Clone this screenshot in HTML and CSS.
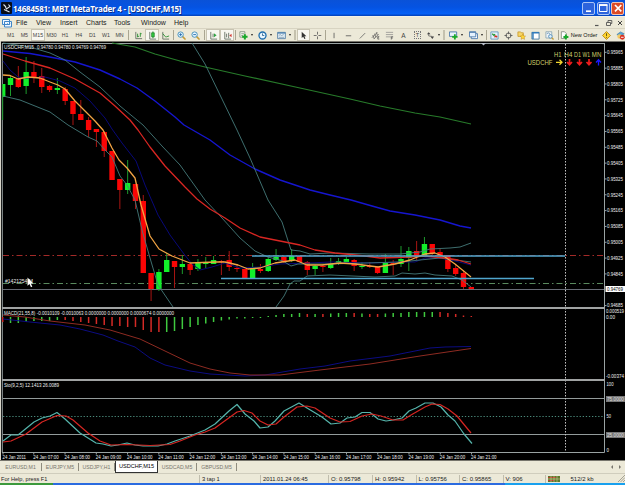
FILE: index.html
```html
<!DOCTYPE html>
<html lang="en">
<head>
<meta charset="utf-8">
<title>14684581: MBT MetaTrader 4 - [USDCHF,M15]</title>
<link rel="stylesheet" href="styles.css">
</head>
<body>
<div class="app">
  <header class="title">
    <svg class="logo" width="11" height="12" viewBox="0 0 11 12"><rect width="11" height="12" rx="1" fill="#080c16"/><path d="M2.500 2.500L5 5M7.500 2.500L9 4.500 5.500 7 4.500 5M3 7.500L8.500 10" stroke="#dfe6ee" stroke-width="1.1" fill="none"/></svg>
    <span class="title-text">14684581: MBT MetaTrader 4 - [USDCHF,M15]</span>
    <div class="winbtns">
      <b><svg width="12" height="12" viewBox="0 0 12 12"><path d="M3 9.2h5" stroke="#fff" stroke-width="1.7"/></svg></b>
      <b><svg width="12" height="12" viewBox="0 0 12 12"><path d="M2.5 3.2h7.5v6.3H2.5z" stroke="#fff" fill="none"/><path d="M2 3h8.500" stroke="#fff" stroke-width="1.8"/></svg></b>
      <b class="close"><svg width="12" height="12" viewBox="0 0 12 12"><path d="M3 3l6.3 6.3M9.3 3L3 9.3" stroke="#fff" stroke-width="1.7"/></svg></b>
    </div>
  </header>
  <nav class="menu">
    <svg class="menu-icon" width="10" height="10" viewBox="0 0 10 10"><path d="M.5 1.5h7v5h-7zM2.5 3.5h7v5.5h-7z" fill="#eef6ff" stroke="#3f86c8"/><path d="M4 7l1.5-1.5L7 7l1-2" stroke="#3f86c8" fill="none" stroke-width=".8"/></svg>
    <span class="m20">File</span><span class="m24">View</span><span class="m26">Insert</span><span class="m28">Charts</span><span class="m27">Tools</span><span class="m33">Window</span><span>Help</span>
    <div class="mdi">
      <svg width="10" height="10" viewBox="0 0 10 10"><path d="M3 7.5h3.5" stroke="#555" stroke-width="1.2"/></svg>
      <svg width="10" height="10" viewBox="0 0 10 10"><path d="M2.5 4.500h4v3h-4zM4 4.500v-2h3.800v3H6.500" stroke="#555" fill="none" stroke-width=".9"/></svg>
      <svg width="10" height="10" viewBox="0 0 10 10"><path d="M3 3l4 4M7 3L3 7" stroke="#444" stroke-width="1"/></svg>
    </div>
  </nav>
  <div class="tools">
    <span class="tf">M1</span><span class="tf">M5</span><span class="tf on">M15</span><span class="tf">M30</span><span class="tf">H1</span><span class="tf">H4</span><span class="tf">D1</span><span class="tf">W1</span><span class="tf">MN</span>
    <i class="sep s5"></i>
    <span class="cell"><svg viewBox="0 0 10 10"><path d="M2 1v7.500h7" stroke="#667064" fill="none"/><path d="M4 3v4M4 6h1.500M7 2v4.500M7 3h1.500" stroke="#2b9133"/></svg></span>
    <span class="cell on"><svg viewBox="0 0 10 10"><path d="M2 1v8h7" stroke="#667064" fill="none"/><path d="M5.500.5v7.500" stroke="#187a22"/><path d="M4 2h3v4.500H4z" fill="#31c740" stroke="#187a22" stroke-width=".7"/></svg></span>
    <span class="cell w13"><svg viewBox="0 0 10 10"><path d="M2 1v8h7" stroke="#667064" fill="none"/><path d="M2 3l3 3.500h1L9 5.500" stroke="#2b9133" fill="none"/></svg></span>
    <i class="sep s2"></i>
    <span class="cell"><svg viewBox="0 0 10 10"><path d="M6 6l3.500 3.500" stroke="#c59b35" stroke-width="1.700"/><circle cx="4" cy="4" r="3" fill="#e3f5ff" stroke="#3e8bb9"/><path d="M2.500 4h3M4 2.500v3" stroke="#246aac"/></svg></span>
    <span class="cell"><svg viewBox="0 0 10 10"><path d="M6 6l3.500 3.500" stroke="#c59b35" stroke-width="1.700"/><circle cx="4" cy="4" r="3" fill="#e3f5ff" stroke="#3e8bb9"/><path d="M2.500 4h3" stroke="#246aac"/></svg></span>
    <i class="sep s4"></i>
    <span class="cell on"><svg viewBox="0 0 10 10"><path d="M2 1v8h7M4.500 3v4" stroke="#667064" fill="none"/><path d="M5.500 2.500l3 2.300-3 2.200z" fill="#30a343"/></svg></span>
    <span class="cell on w15"><svg viewBox="0 0 10 10"><path d="M2 1v8h7M4 3v4M6.300 2v6" stroke="#667064" fill="none"/><path d="M9.500 3L7 5l2.500 2z" fill="#d23a30"/></svg></span>
    <i class="sep s2"></i>
    <span class="cell drop"><svg viewBox="0 0 10 10"><path d="M1 .8h5.500v6H1z" fill="#f6f6ef" stroke="#6d806d" stroke-width=".8"/><path d="M2.500 3h3M2.500 5h2" stroke="#8b9b8b"/><path d="M6.500 3.500v6M3.500 6.500h6" stroke="#18a929" stroke-width="2.200"/></svg></span>
    <span class="cell drop"><svg viewBox="0 0 10 10"><circle cx="5" cy="5" r="3.900" fill="#e8f6ff" stroke="#216fae" stroke-width="1.500"/><path d="M5 2.700V5h2" stroke="#245b89" fill="none" stroke-width=".9"/></svg></span>
    <span class="cell drop"><svg viewBox="0 0 10 10"><path d="M.7 1.500h8.600v7H.7z" fill="#e6f2fb" stroke="#5881a5"/><path d="M.7 2.200h8.600" stroke="#4a7faf" stroke-width="1.400"/><path d="M2 5l1.500-1 1.500 1L7.500 4M2 7h6" stroke="#6f8da2" fill="none" stroke-width=".8"/></svg></span>
    <i class="sep s4 dbl"></i>
    <span class="cell on w13"><svg viewBox="0 0 10 10"><path d="M3 .8v7l1.700-1.500L6 9l1.200-.6L6 5.800h2.200z" fill="#333"/></svg></span>
    <span class="cell"><svg viewBox="0 0 10 10"><path d="M5 .8v3.200M5 6v3.200M.8 5H4M6 5h3.200" stroke="#555" stroke-width=".9"/></svg></span>
    <i class="sep s3"></i>
    <span class="cell"><svg viewBox="0 0 10 10"><path d="M4.500 2v6" stroke="#555" stroke-width=".9"/></svg></span>
    <span class="cell"><svg viewBox="0 0 10 10"><path d="M2 5.300h6" stroke="#555" stroke-width=".9"/></svg></span>
    <span class="cell"><svg viewBox="0 0 10 10"><path d="M2 8.300l6-6" stroke="#555" stroke-width=".8"/></svg></span>
    <span class="cell w13"><svg viewBox="0 0 10 10"><path d="M1 7.500l6-6M3 9l5.500-5.500M2 4.500l1.500 4M4 3l1.500 4M6 1.500l1 3M9.200 6H7.500v3h1.700M7.500 7.500h1.500" stroke="#555" fill="none" stroke-width=".8"/></svg></span>
    <span class="cell"><svg viewBox="0 0 10 10"><path d="M1 1.500h8M1 4h8M1 6.500h8" stroke="#888" stroke-width=".8"/><path d="M7 9.500v-3h2M7 8h1.500" stroke="#555" fill="none" stroke-width=".8"/></svg></span>
    <span class="cell letter">A</span>
    <span class="cell letter"><em>T</em></span>
    <span class="cell drop w18"><svg viewBox="0 0 10 10"><path d="M1 3.500L3 1.500l2 2zM5 6l2 3 2-3z" fill="#444"/><path d="M3 3v2.500L7 6" stroke="#555" fill="none" stroke-width=".8"/></svg></span>
    <i class="sep s4 dbl"></i>
    <span class="cell drop w20"><svg viewBox="0 0 10 10"><path d="M.5 1h8v5h-8z" fill="#e9f3fc" stroke="#4877aa"/><path d="M6.500 3.500v6M3.500 6.500h6" stroke="#18a929" stroke-width="2"/></svg></span>
    <span class="cell drop"><svg viewBox="0 0 10 10"><path d="M2.500 3h7v5.500h-7z" fill="#fff" stroke="#4877aa"/><path d="M.5 1h7v5.500h-7z" fill="#e5f2ff" stroke="#4877aa"/><path d="M.5 1.300h7" stroke="#4877aa" stroke-width="1.200"/></svg></span>
    <i class="sep s3"></i>
    <span class="cell w13"><svg viewBox="0 0 10 10"><path d="M1 1h8v8H1z" fill="#e5f1fb" stroke="#6398bf"/><path d="M2.500 3l2 2 1-1.500" stroke="#25922f" fill="none" stroke-width="1.400"/><path d="M5 7l1.500-1.500L8 7" stroke="#d12f25" fill="none" stroke-width="1.400"/></svg></span>
    <span class="cell"><svg viewBox="0 0 10 10"><circle cx="5" cy="5" r="2.800" fill="none" stroke="#555"/><path d="M5 .5v3M5 6.500v3M.5 5h3M6.500 5h3" stroke="#555" stroke-width=".9"/></svg></span>
    <span class="cell w13"><svg viewBox="0 0 10 10"><path d="M1 1h3l1 1h2v4H1z" fill="#f7d667" stroke="#c39120" stroke-width=".8"/><path d="M6.500 3.500l1 2 2 .2-1.500 1.500.4 2.100-1.900-1-2 1 .4-2.100L3.500 5.700l2-.2z" fill="#ffd537" stroke="#b98416" stroke-width=".5"/></svg></span>
    <span class="cell"><svg viewBox="0 0 10 10"><path d="M1 1.500h8v7.500H1z" fill="#fff" stroke="#45789f"/><path d="M1 2h8M2.200 2v7" stroke="#327bba" stroke-width="1.600"/></svg></span>
    <span class="cell"><svg viewBox="0 0 10 10"><path d="M1 .8h6.500v7H1z" fill="#eef3f5" stroke="#7e9aaa" stroke-width=".8"/><path d="M2 3l2-1 2 2" stroke="#6f9abb" fill="none"/><circle cx="6" cy="6" r="2" fill="#dff1ff" stroke="#568eb9"/><path d="M7.500 7.500l2 2" stroke="#c59b35" stroke-width="1.400"/></svg></span>
    <i class="sep s4"></i>
    <span class="cell order"><svg viewBox="0 0 10 10"><path d="M1.500.8H5l2 2v5.500H1.500z" fill="#fff" stroke="#707970" stroke-width=".8"/><path d="M6.500 4v5.500M3.800 6.700h5.500" stroke="#18a929" stroke-width="2.100"/></svg>New Order</span>
    <span class="cell"><svg viewBox="0 0 10 10"><path d="M5 .6L9.400 5 5 9.400.6 5z" fill="#ffd633" stroke="#b88814"/><path d="M5 2.500v3M5 6.500v1" stroke="#5b4811"/></svg></span>
    <span class="cell"><svg viewBox="0 0 10 10"><path d="M1 4l4-3 4 2-2 2H3z" fill="#58a5d5" stroke="#3b7da7" stroke-width=".7"/><circle cx="4" cy="6" r="2.500" fill="#f2cb66"/><circle cx="7" cy="7" r="2.700" fill="#d92e20"/><path d="M5.500 7h3" stroke="#fff"/></svg></span>
  </div>
  <main class="chart">
    <svg id="chart" width="625" height="420" viewBox="0 41 625 420">
      <rect x="0" y="41" width="625" height="420" fill="#000"/>
      <path d="M0 41.500H625" stroke="#77756c"/>
      <path d="M.5 41V461" stroke="#d8d5c9"/>
      <path d="M2.300 43.500V452.500M2 43.500H604.500M604.500 43V452.500M2 452.500H604.500" stroke="#9aa3a3" fill="none"/>
      <path d="M0 460.500H625" stroke="#77756c"/>
      <path d="M3 289.500H604" stroke="#686c76"/>
      <path d="M3 255.500H604" stroke="#a32a28" stroke-dasharray="6 3 1.500 3"/>
      <path d="M3 283.500H604" stroke="#5a8a5e" stroke-dasharray="6 3 1.500 3"/>
      <path d="M3 398.500H604M3 434.500H604" stroke="#939b9b"/>
      <path d="M3 416.500H604" stroke="#4b8a7b" stroke-dasharray="1.300 1.800"/>
      <path d="M565.500 44V452" stroke="#c4c4c4" stroke-dasharray="1.500 1.500"/>
      <g id="candles"></g>
      <g id="macd"></g>
      <g id="lines" fill="none" stroke-linejoin="round"></g>
      <path d="M252 256H565M221 278.500H534" stroke="#50a6ce" stroke-width="1.300"/>
      <path d="M2 308H605M2 380H605" stroke="#a0a3a3" stroke-width="1.800"/>
      <path d="M481 43h5l-2.500 2.500z" fill="#b9bfcc"/>
      <g id="labels" fill="#d9d9d9"></g>
      <g stroke-width="1.300" fill="none">
        <path d="M556 62.300h6M559.500 59.800l2.500 2.500-2.500 2.500" stroke="#f3d62e"/>
        <path d="M569.500 59v5.500M567 62l2.500 2.700L572 62M579.500 59v5.500M577 62l2.500 2.700L582 62M589 59v5.500M586.500 62l2.500 2.700L591.500 62" stroke="#ee1c1c" stroke-width="1.700"/>
        <path d="M598.500 65.500V60M596 62.500l2.500-2.700L601 62.500" stroke="#1a1aff"/>
      </g>
      <path d="M27.500 277.500v8.200l2-1.700 1.500 3.200 1.300-.7-1.500-3h2.500z" fill="#fff"/>
    </svg>
  </main>
  <div class="tabs">
    <span class="t1">EURUSD,M1</span><span class="t2">EURJPY,M5</span><span class="t3">USDJPY,H1</span><span class="t4 active">USDCHF,M15</span><span class="t5">USDCAD,M5</span><span class="t6">GBPUSD,M5</span>
    <svg class="arrows" width="14" height="6" viewBox="0 0 14 6"><path d="M4 1v4L2 3zM10 1v4l2-2z" fill="#77756c"/></svg>
  </div>
  <footer class="status">
    <span class="f1">For Help, press F1</span><span class="f2">3 tap 1</span><span class="f3">2011.01.24 06:45</span><span class="f4">O: 0.95798</span><span class="f5">H: 0.95942</span><span class="f5">L: 0.95756</span><span class="f5">C: 0.95865</span><span class="f6">V: 906</span>
    <span class="f7"><svg width="12" height="6" viewBox="0 0 12 6"><path d="M0 0h12v6H0z" fill="#5d7a2c"/><path d="M0 1.500h8M0 4.500h6" stroke="#b8432c" stroke-width="1.200"/><path d="M3 0v6M6 0v6M9 0v6M0 3h12" stroke="#e3d9a8" stroke-width=".5"/></svg>512/2 kb</span>
    <svg class="grip" width="7" height="7" viewBox="0 0 7 7"><path d="M0 7l7-7M2.500 7L7 2.500M5 7l2-2" stroke="#a5a295"/></svg>
  </footer>
  <div class="taskbar"></div>
</div>
<script src="script.js"></script>
</body>
</html>
```
FILE: styles.css
```css
* { box-sizing: border-box; }
body { margin: 0; background: #ece9d8; font-family: "Liberation Sans", sans-serif; overflow: hidden; }
.app { width: 625px; height: 485px; display: flex; flex-direction: column; }
svg { display: block; flex: none; }

.title { height: 16px; flex: none; display: flex; align-items: center; padding: 0 1px 0 1px; background: linear-gradient(#0a52d8, #0553e2 45%, #0560f6 85%, #033fb5); }
.title-text { margin-left: 1px; color: #fff; font: bold 8px "Open Sans", sans-serif; letter-spacing: -.22px; white-space: nowrap; text-shadow: 1px 1px 0 #0a2c86; }
.winbtns { margin-left: auto; display: flex; gap: 1.5px; }
.winbtns b { width: 13px; height: 13px; border: 1px solid #a9c3f5; border-radius: 2px; background: #2d63dc; display: flex; align-items: center; justify-content: center; }
.winbtns .close { background: #dc4a26; border-color: #f0c2b2; }

.menu { height: 12px; flex: none; display: flex; align-items: center; padding-left: 2px; font-size: 7px; color: #222; border-top: 1px solid #f3f1e6; }
.menu-icon { margin-right: 4px; }
.m20 { width: 20px; } .m24 { width: 24px; } .m26 { width: 26px; } .m28 { width: 28px; } .m27 { width: 27px; } .m33 { width: 33px; }
.mdi { margin-left: auto; display: flex; gap: 1.5px; }

.tools { height: 13px; flex: none; display: flex; align-items: center; padding-left: 4px; font-size: 5.3px; color: #444; border-top: 1px solid #d8d4c2; overflow: hidden; }
.tf { width: 13.6px; flex: none; height: 12px; line-height: 13px; text-align: center; }
.cell { width: 14px; height: 12px; flex: none; display: flex; align-items: center; justify-content: center; }
.cell svg { width: 9px; height: 9px; }
.on { background: #f8f7f1; box-shadow: inset 0 0 0 1px #c8c4b2; }
.w13 { width: 13px; } .w15 { width: 14px; }
.drop { width: 19px; gap: 3px; }
.drop::after { content: ""; border: 1.5px solid transparent; border-top: 2px solid #222; border-bottom: 0; }
.w18 { width: 18px; } .w20 { width: 20px; }
.letter { font-size: 6.5px; }
.letter em { font-style: normal; font-size: 5.5px; border: 1px dotted #777; line-height: 6px; padding: 0 1px; }
.order { width: 39px; gap: 1.5px; font-size: 5.5px; color: #111; white-space: nowrap; justify-content: flex-start; }
.sep { height: 10px; flex: none; background: linear-gradient(#aaa692, #aaa692) center / 1px 100% no-repeat; }
.dbl { background-size: 2px 100%; background-image: linear-gradient(#c5c1ae, #c5c1ae); }
.s2 { width: 2px; } .s3 { width: 3px; } .s4 { width: 4px; } .s5 { width: 5px; }

.chart { height: 420px; flex: none; }
.chart text { font-family: "Liberation Sans", sans-serif; }

.tabs { height: 12px; flex: none; display: flex; align-items: center; font-size: 5.2px; color: #77756c; }
.tabs span { height: 8px; line-height: 8px; text-align: center; border-right: 1px solid #8f8c7e; white-space: nowrap; }
.t1 { width: 42px; } .t2 { width: 37px; } .t3 { width: 36px; } .t4 { width: 43px; } .t5 { width: 39px; } .t6 { width: 40px; }
.tabs .active { background: #fff; color: #000; height: 12px; line-height: 11px; border: 1px solid #333; border-top: 0; font-size: 5.6px; }
.arrows { margin-left: auto; margin-right: 2px; }

.status { height: 10px; flex: none; display: flex; align-items: center; font-size: 6px; color: #222; border-top: 1px solid #d0cdbd; }
.status > span { height: 8px; line-height: 8px; padding-left: 2px; border-right: 1px solid #c0bdad; white-space: nowrap; }
.status .f1 { width: 200px; padding-left: 1px; font-size: 5.6px; } .f2 { width: 61px; } .f3 { width: 68px; } .f4 { width: 44px; } .f5 { width: 43.5px; } .f6 { width: 42px; }
.status .f2, .status .f3 { font-size: 5.8px; }
.status .f7 { display: flex; align-items: center; gap: 11px; border: 0; }
.grip { margin-left: auto; }
.taskbar { height: 2px; flex: none; background: linear-gradient(90deg, #3c9a3c 0 53px, #2b6be0 53px 505px, #19a0ee 505px); }
```
FILE: script.js
```js
const NS = 'http://www.w3.org/2000/svg';
const x = i => 2.7 + 7.81 * i;

function add(parent, tag, attrs, text) {
  const el = document.createElementNS(NS, tag);
  for (const k in attrs) el.setAttribute(k, attrs[k]);
  if (text) el.textContent = text;
  document.getElementById(parent).appendChild(el);
}

// direction, high, body top, body bottom, low
const candles = `g 84 84 97 120|g 75 78 85 96|r 66 79 87 88|g 57 72 86 94|r 61 72 78 83|r 68 76 87 93|r 85 86 90 92|g 78 88 90 94|r 87 89 101 105|r 101 101 114 125|r 100 114 120 120|r 117 120 130 137|r 129 129 132 147|r 131 132 151 157|r 151 151 180 180|r 179 179 190 209|g 160 183 190 194|r 184 184 201 209|r 195 201 273 273|r 273 273 289 301|g 269 272 289 291|g 253 260 272 272|r 261 261 267 288|g 255 264 267 274|r 262 264 270 275|g 259 263 269 271|g 257 263 264 268|g 256 260 264 264|r 260 261 262 275|r 251 260 267 271|r 264 268 269 272|r 269 269 278 278|g 263 267 278 278|r 264 269 271 273|g 257 259 271 272|g 249 257 260 261|r 256 257 262 263|g 249 256 261 262|r 256 256 262 262|r 261 262 270 275|g 265 266 269 275|r 265 266 267 272|g 258 264 268 269|g 258 261 264 265|g 257 259 263 263|r 259 260 266 271|g 262 266 267 269|r 262 266 267 268|r 266 267 273 274|g 254 263 273 273|r 260 263 264 275|g 246 259 264 267|g 247 251 258 271|r 241 251 257 260|g 237 244 256 256|r 244 244 253 255|r 249 252 256 259|r 255 255 269 272|r 264 268 274 276|r 270 273 287 289|r 287 287 289 289`;
candles.split('|').forEach((row, i) => {
  const [dir, hi, top, bottom, lo] = row.split(' ');
  const left = Math.max(x(i) - 2.7, 2.8);
  add('candles', 'path', { d: `M${x(i)} ${hi}V${lo}`, stroke: dir === 'g' ? '#1c9a2c' : '#a81512' });
  add('candles', 'rect', { x: left, y: top, width: x(i) + 2.7 - left, height: bottom - top, fill: dir === 'g' ? '#12f02a' : '#fb0505' });
});

// histogram bar ends; the zero level is at 317
const hist = [322,323,323,322,321,321,321,320,320,321,322,323,324,325,326,326,327,327,330,332,332,332,331,329,327,325,323.5,322,320.5,319.5,318.5,318.5,318,318,316,315,314,314,313,314,314,314,313.5,313,313,313,313.5,314,314,313.5,313,313,312,312,312,312,312,313,314,315.5,316];
const reds = [0,8,9,10,11,12,13,14,15,16,17,18,19,20,39,41,45,47,48,56,57,58,59,60];
hist.forEach((v, i) => add('macd', 'path', { d: `M${x(i)} 317V${v}`, 'stroke-width': 1.5, stroke: reds.includes(i) ? '#d42a26' : '#3fc93f' }));

const series = [
  ['#277a2a', 1.2, '112,43 135,47 155,54 180,61 205,67 245,76 300,88 350,99 380,106 415,113 440,117 471,124'],
  ['#1515cf', 1.4, '3,51 30,53.5 55,58 75,62 100,70 120,79 137,88 155,101 175,117 184,125 210,140 230,155 255,169 280,180 310,190 330,195 351,200 372,206 390,211 415,215 440,220 460,226 471,228'],
  ['#080878', 1, '3,61 10,70 18,77 26,78 45,77 60,81 75,88 90,101 105,118 112,129 122,143 136,161 145,185 158,215 170,235 184,254 192,264 200,270 212,267 225,263 240,268 260,267 280,264 310,263 330,262 370,263 400,262 415,262 425,258 440,258 455,261 471,265'],
  ['#457b7b', .9, '3,43 30,47 50,53 65,60 80,72 100,87 120,106 143,125 162,146 180,165 205,200 222,218 240,238 255,251 268,257 283,261 291,266 298,264 330,264 400,262 440,258 471,262'],
  ['#457b7b', .9, '192,43 205,64 237,130 250,158 268,200 282,222 291,250 300,251 310,254 330,253 370,254 400,254 420,252 430,249 450,248 460,247 471,243'],
  ['#457b7b', .9, '3,96 20,100 35,106 50,112 68,125 88,137 97,141 105,150 112,157 120,176 127,185 135,200 142,230 150,258 158,285 173,307'],
  ['#457b7b', .9, '276,307 284,296 290,284 294,281 300,281 307,276 330,275 375,277 395,276 402,273 415,274 425,273 435,275 452,276 462,280 471,287'],
  ['#d92622', 1.3, '3,54 25,61 50,68 75,79 100,93 115,106 130,120 138,130 150,147 165,166 185,187 197,199 210,209 225,218 240,228 260,237 285,242 300,245 315,250 335,253 365,256 380,258 410,257 425,256 445,258 458,260 471,264'],
  ['#f2a444', 1.3, '3,75 10,75.5 18,79 28,77 40,78 50,82 58,85 65,89 75,101 85,111 95,121 103,130 112,148 119,160 127,168 135,178 141,205 150,236 159,249 172,256 190,263 215,262 225,262 238,265 248,269 260,268 275,263 295,260 307,265 322,265 340,263 355,264 378,267 395,264 410,260 425,254 435,253 445,257 455,264 471,277'],
  ['#0c0c82', 1, '3,319 30,322 60,325 80,329 103,335 118,341 135,347 150,358 165,365 190,371 210,374 245,376 265,375 300,369 325,366 350,361 390,356 415,351 430,348 445,347 471,346.5'],
  ['#8e2b22', 1, '3,315 25,317 50,321 85,325 110,330 140,339 165,351 190,363 210,369 230,373 250,375 280,375 320,370 370,364 420,356 471,348.5'],
  ['#56b5ac', 1.2, '3,441 11,435 18,435 34,422 42,418 50,416 57,412.5 65,419 80,433 96,443 103,444 111,446 118,445 127,443 135,445 143,446 158,446 167,444 175,441 190,436 205,430 215,424 229,411 237,404.5 245,414 254,421 260,428 268,427 275,421 284,411 299,403 307,408 322,417 331,424 340,423 347,418 355,417 362,412.5 370,412.5 378,419 386,421 393,420 402,418 409,411 416,408 425,403 433,403 441,407 448,415 455,421 464,434 472,443.5'],
  ['#d52622', 1.2, '3,442 11,441 26,434 42,422 57,415.5 66,416 73,420 88,433 100,441 111,445 127,444.5 150,445.5 170,444.5 180,441 195,435 205,432 215,428 237,412 244,410.5 252,413 260,421 268,425 276,424 284,417 297,407 307,406 315,408 330,418 340,422 350,421.5 362,416 372,414 381,416 393,420 403,420 411,415 425,407 432,404 440,404.5 448,409 457,416 471,433']
];
series.forEach(([stroke, w, points]) => add('lines', 'polyline', { stroke, 'stroke-width': w, points }));

function label(str, px, mid, width, size = 5.2, fill = '#f0f0f0') {
  add('labels', 'text', { x: px, y: mid + size * .36, 'font-size': size, fill, textLength: width, lengthAdjust: 'spacingAndGlyphs' }, str);
}
for (let i = 0; i <= 16; i++) {
  if (i === 15) continue;
  const y = 52.3 + 15.83 * i;
  add('labels', 'path', { d: `M604 ${y}h2.500`, stroke: '#9aa3a3' });
  label((0.95965 - 0.0008 * i).toFixed(5), 607, y, 16);
}
add('labels', 'rect', { x: 605.5, y: 286, width: 19.5, height: 6, fill: '#fff' });
label('0.94769', 607, 289, 16, 5.2, '#000');
label('0.000519', 606, 311.5, 18);
label('0.00', 606, 317, 9);
label('-0.00374', 606, 376.2, 18);
label('100', 606.5, 384, 7);
label('50', 606.5, 416.5, 4.5);
label('0', 606.5, 450, 2.5);
add('labels', 'rect', { x: 606, y: 396, width: 19, height: 6, fill: '#777' });
add('labels', 'rect', { x: 606, y: 432, width: 19, height: 6, fill: '#777' });
label('75.0000', 607, 399, 17, 5.2, '#ddd');
label('25.0000', 607, 435, 17, 5.2, '#ddd');
label('USDCHF,M15', 4, 47.3, 30);
label('0.94780 0.94780 0.94769 0.94769', 37, 47.3, 69);
label('#1421254 M', 5, 280.8, 28);
label('MACD(21,55,8) -0.0010109 -0.0010063 0.0000000 0.0000000 0.0000674 0.0000000', 4, 313, 170);
label('Sto(9,2,5) 12.1413 26.0089', 4, 385, 55);
for (let i = 0; i < 16; i++) {
  const px = i ? 2 + 31.27 * i : 2.5;
  label(i ? `24 Jan ${String(i + 6).padStart(2, '0')}:00` : '24 Jan 2011', px, 457.4, i ? 25.5 : 23.5);
  add('labels', 'path', { d: `M${px + .5} 452v2.500`, stroke: '#9aa3a3' });
}
label('USDCHF', 527.5, 62.3, 25, 6.8, '#d0cf6c');
[['H1', 554, 7.5], ['H4', 564, 8.5], ['D1', 574, 7], ['W1', 582.5, 7.5], ['MN', 591.8, 9.5]].forEach(([s, px, w]) => label(s, px, 54.7, w, 6.8, '#d0cf6c'));
```
